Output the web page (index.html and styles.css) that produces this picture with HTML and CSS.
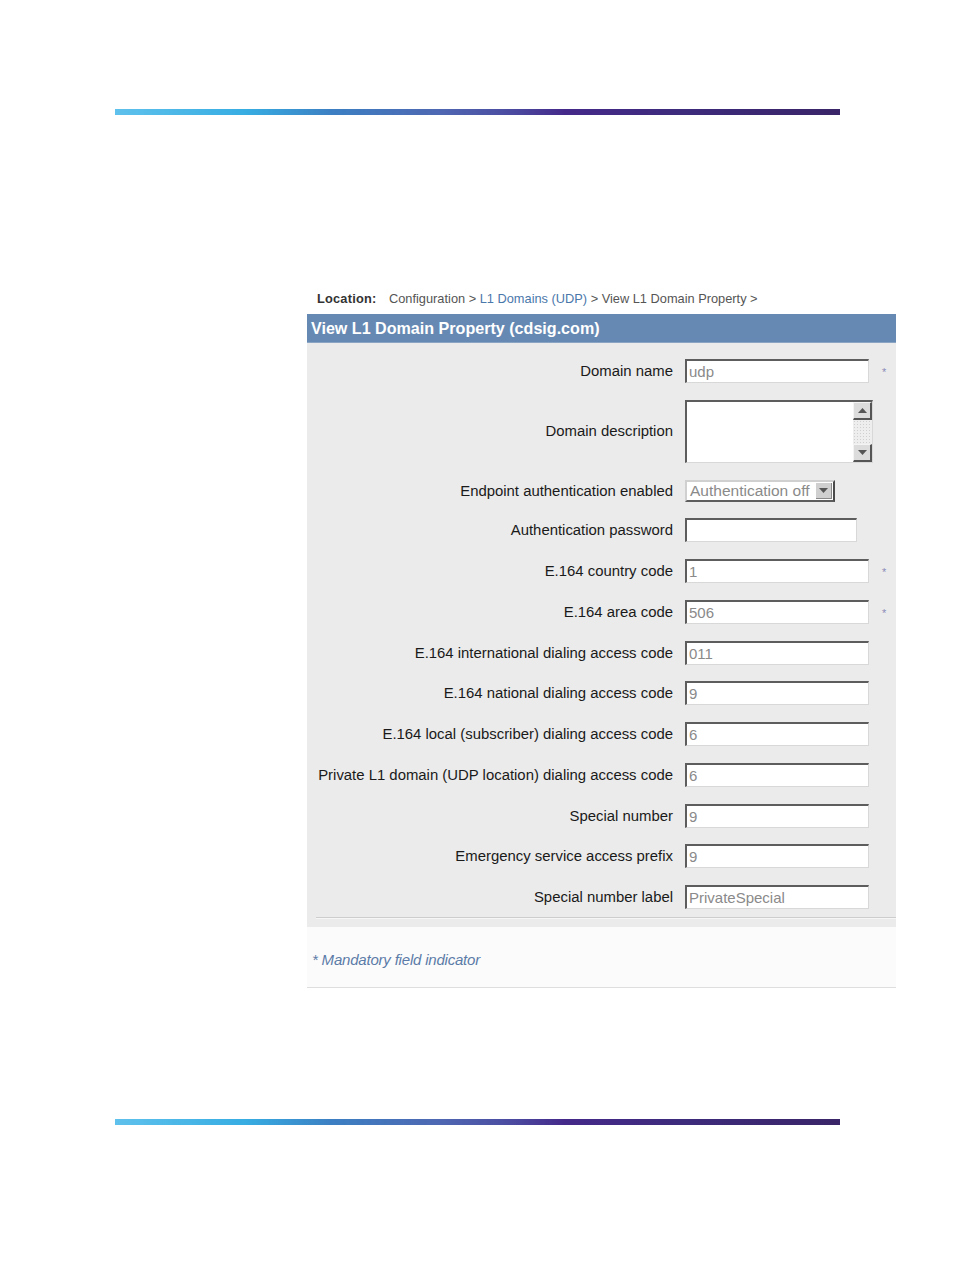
FILE: index.html
```html
<!DOCTYPE html>
<html>
<head>
<meta charset="utf-8">
<link rel="stylesheet" href="styles.css">
</head>
<body>
<div class="page">
  <div class="rule"></div>
  <div class="panel">
    <div class="location"><span class="loc-label">Location:</span><span class="crumbs">Configuration &gt; <span class="crumb-link">L1 Domains (UDP)</span> &gt; View L1 Domain Property &gt;</span></div>
    <div class="header">View L1 Domain Property (cdsig.com)</div>
    <div class="form">
      <div class="grid">
        <div class="label">Domain name</div>
        <div class="field"><div class="input">udp</div></div>
        <div class="star">*</div>

        <div class="label">Domain description</div>
        <div class="field"><div class="textarea"><div class="ta-body"></div><div class="scrollbar"><div class="sb-btn"><svg width="9" height="5" viewBox="0 0 9 5"><path d="M0 5 L4.5 0 L9 5 Z" fill="#555"/></svg></div><div class="sb-track"></div><div class="sb-btn"><svg width="9" height="5" viewBox="0 0 9 5"><path d="M0 0 L4.5 5 L9 0 Z" fill="#555"/></svg></div></div></div></div>
        <div class="star"></div>

        <div class="label">Endpoint authentication enabled</div>
        <div class="field"><div class="select"><span class="sel-text">Authentication off</span><span class="sel-btn"><svg width="9" height="5" viewBox="0 0 9 5"><path d="M0 0 L4.5 5 L9 0 Z" fill="#555"/></svg></span></div></div>
        <div class="star"></div>

        <div class="label">Authentication password</div>
        <div class="field"><div class="input pw"></div></div>
        <div class="star"></div>

        <div class="label">E.164 country code</div>
        <div class="field"><div class="input">1</div></div>
        <div class="star">*</div>

        <div class="label">E.164 area code</div>
        <div class="field"><div class="input">506</div></div>
        <div class="star">*</div>

        <div class="label">E.164 international dialing access code</div>
        <div class="field"><div class="input">011</div></div>
        <div class="star"></div>

        <div class="label">E.164 national dialing access code</div>
        <div class="field"><div class="input">9</div></div>
        <div class="star"></div>

        <div class="label">E.164 local (subscriber) dialing access code</div>
        <div class="field"><div class="input">6</div></div>
        <div class="star"></div>

        <div class="label">Private L1 domain (UDP location) dialing access code</div>
        <div class="field"><div class="input">6</div></div>
        <div class="star"></div>

        <div class="label">Special number</div>
        <div class="field"><div class="input">9</div></div>
        <div class="star"></div>

        <div class="label">Emergency service access prefix</div>
        <div class="field"><div class="input">9</div></div>
        <div class="star"></div>

        <div class="label">Special number label</div>
        <div class="field"><div class="input">PrivateSpecial</div></div>
        <div class="star"></div>
      </div>
      <div class="form-line"></div>
    </div>
    <div class="footer"><span class="mandatory">* Mandatory field indicator</span></div>
  </div>
  <div class="rule bottom"></div>
</div>
</body>
</html>
```
FILE: styles.css
```css
html, body {
  margin: 0;
  padding: 0;
  background: #ffffff;
  font-family: "Liberation Sans", Arial, sans-serif;
}

.page {
  padding-top: 109px;
  width: 954px;
  height: 1272px;
  box-sizing: border-box;
}

.rule {
  margin-left: 115px;
  width: 725px;
  height: 6px;
  background: linear-gradient(90deg, #5fc1ec 0%, #37ade2 18%, #3c7fc2 30%, #4f67b2 45%, #4b4aa0 55%, #45298a 62%, #3d2b7c 78%, #3a2568 100%);
}

.rule.bottom {
  margin-top: 131px;
}

.panel {
  margin-top: 173px;
  margin-left: 307px;
  width: 589px;
}

.location {
  height: 21px;
  display: flex;
  align-items: center;
  padding-left: 10px;
  font-size: 12.8px;
  color: #555555;
  margin-bottom: 5px;
}

.loc-label {
  color: #333333;
  font-weight: bold;
  width: 72px;
  letter-spacing: 0.2px;
}

.crumbs {
  color: #555555;
}

.crumb-link {
  color: #4a78ab;
}

.header {
  height: 29px;
  background: #6689b3;
  color: #ffffff;
  font-weight: bold;
  font-size: 16.1px;
  line-height: 29px;
  padding-left: 4px;
  border-bottom: 1px solid #8aa5c4;
  box-sizing: border-box;
}

.form {
  background: #ebebeb;
  padding-top: 16px;
  padding-bottom: 8px;
}

.grid {
  display: grid;
  grid-template-columns: 366px 188px 1fr;
  column-gap: 12px;
  row-gap: 16.75px;
  align-items: center;
}

.label {
  text-align: right;
  font-size: 14.9px;
  color: #1a1a1a;
  white-space: nowrap;
}

.field {
  display: flex;
  align-items: center;
}

.star {
  color: #8d8db9;
  font-size: 11px;
  margin-left: -3px;
  padding-top: 2px;
}

.input {
  width: 184px;
  height: 24px;
  box-sizing: border-box;
  background: #ffffff;
  border-top: 2px solid #5d5d5d;
  border-left: 2px solid #5d5d5d;
  border-right: 1px solid #d8d8d8;
  border-bottom: 1px solid #d8d8d8;
  color: #8a8a8a;
  font-size: 15px;
  line-height: 21px;
  padding-left: 2px;
  white-space: nowrap;
}

.input.pw {
  width: 172px;
}

.textarea {
  width: 188px;
  height: 63px;
  box-sizing: border-box;
  background: #ffffff;
  border-top: 2px solid #5d5d5d;
  border-left: 2px solid #5d5d5d;
  border-right: 1px solid #d8d8d8;
  border-bottom: 1px solid #d8d8d8;
  display: flex;
}

.ta-body {
  flex: 1;
}

.scrollbar {
  width: 19px;
  display: flex;
  flex-direction: column;
  background: #e6e6e6;
}

.sb-btn {
  height: 18px;
  box-sizing: border-box;
  background: #dcdcdc;
  border-top: 1px solid #f4f4f4;
  border-left: 1px solid #f4f4f4;
  border-right: 2px solid #555555;
  border-bottom: 2px solid #555555;
  display: flex;
  align-items: center;
  justify-content: center;
}

.sb-track {
  flex: 1;
  background-color: #eeeeee;
  background-image: radial-gradient(#cfcfcf 0.6px, transparent 0.8px);
  background-size: 3px 3px;
}

.select {
  width: 150px;
  height: 22px;
  box-sizing: border-box;
  background: #ffffff;
  border: 2px solid #5d5d5d;
  border-top-color: #d0d0d0;
  border-left-color: #d0d0d0;
  border-right-color: #4a4a4a;
  display: flex;
  align-items: center;
}

.sel-text {
  flex: 1;
  color: #8a8a8a;
  font-size: 15.5px;
  padding-left: 3px;
  white-space: nowrap;
  overflow: hidden;
}

.sel-btn {
  width: 16px;
  height: 16px;
  background: #cfcfcf;
  border-right: 1px solid #888;
  border-bottom: 1px solid #888;
  box-sizing: border-box;
  display: flex;
  align-items: center;
  justify-content: center;
  margin-right: 1px;
}

.form-line {
  margin-top: 8px;
  margin-left: 9px;
  height: 1px;
  background: #cdcdcd;
  border-bottom: 1px solid #f6f6f6;
}

.footer {
  background: #fbfbfb;
  height: 60px;
  border-bottom: 1px solid #dedede;
  display: flex;
  align-items: center;
  padding-left: 5px;
  padding-top: 5px;
  box-sizing: border-box;
  height: 61px;
}

.mandatory {
  font-style: italic;
  color: #5b7ba8;
  font-size: 15px;
  letter-spacing: -0.2px;
}
```
